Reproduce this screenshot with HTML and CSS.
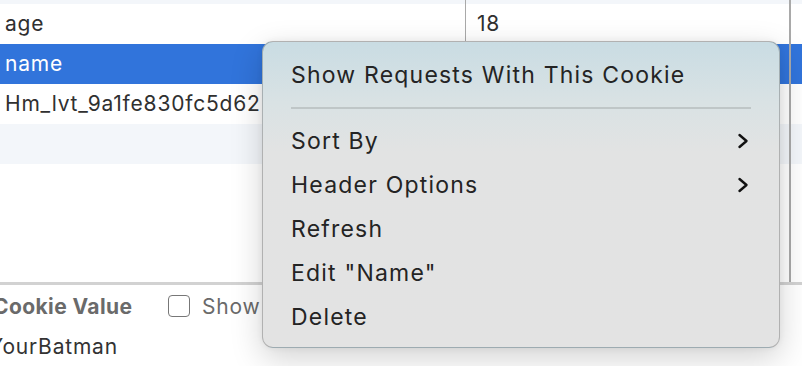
FILE: index.html
```html
<!DOCTYPE html>
<html>
<head>
<meta charset="utf-8">
<link rel="stylesheet" href="styles.css">
</head>
<body>
<div class="page">
  <div class="table">
    <div class="row stripe top"><div class="cell name"></div><div class="cell value"></div><div class="cell rest"></div></div>
    <div class="row"><div class="cell name">age</div><div class="cell value">18</div><div class="cell rest"></div></div>
    <div class="row selected"><div class="cell name">name</div><div class="cell value"></div><div class="cell rest"></div></div>
    <div class="row"><div class="cell name">Hm_lvt_9a1fe830fc5d62</div><div class="cell value"></div><div class="cell rest"></div></div>
    <div class="row stripe"><div class="cell name"></div><div class="cell value"></div><div class="cell rest"></div></div>
    <div class="row filler"><div class="cell name"></div><div class="cell value"></div><div class="cell rest"></div></div>
  </div>
  <div class="detail">
    <div class="detail-head">
      <span class="detail-title">Cookie Value</span>
      <label class="check"><span class="box"></span><span class="check-label">Show URL-decoded</span></label>
    </div>
    <div class="detail-value">YourBatman</div>
  </div>

  <div class="menu">
    <div class="item">Show Requests With This Cookie</div>
    <div class="sep"></div>
    <div class="item">Sort By<svg class="chev" viewBox="0 0 12 16"><polyline points="2.5,2 9.5,8 2.5,14"/></svg></div>
    <div class="item">Header Options<svg class="chev" viewBox="0 0 12 16"><polyline points="2.5,2 9.5,8 2.5,14"/></svg></div>
    <div class="item">Refresh</div>
    <div class="item">Edit "Name"</div>
    <div class="item">Delete</div>
  </div>
</div>
</body>
</html>
```

FILE: styles.css
```css
html, body {
  margin: 0;
  padding: 0;
  background: #ffffff;
  overflow: hidden;
}
.page {
  position: relative;
  width: 802px;
  height: 366px;
  font-family: "Inter", "Liberation Sans", sans-serif;
  font-size: 21px;
  letter-spacing: 0.8px;
  color: #303030;
  overflow: hidden;
}
.table {
  display: flex;
  flex-direction: column;
  height: 282px;
}
.row {
  display: flex;
  height: 40px;
  flex: none;
}
.row.top {
  height: 4px;
}
.row.filler {
  flex: 1;
  height: auto;
}
.stripe {
  background: #f3f6fa;
}
.selected {
  background: #3174db;
  color: #ffffff;
}
.cell {
  display: flex;
  align-items: center;
  overflow: hidden;
  white-space: nowrap;
  padding-bottom: 1px;
  box-sizing: border-box;
}
.cell.name {
  width: 466px;
  padding-left: 5px;
  border-right: 1px solid #a9a9a9;
}
.cell.value {
  width: 325px;
  padding-left: 11px;
  border-right: 2px solid #a9a9a9;
}
.cell.rest {
  flex: 1;
}
.detail {
  border-top: 3px solid #d2d2d2;
}
.detail-head {
  display: flex;
  align-items: center;
  height: 42px;
  margin-left: -7px;
}
.detail-title {
  font-weight: 700;
  color: #6a6a6a;
  width: 175px;
  letter-spacing: 0.4px;
}
.check {
  display: flex;
  align-items: center;
  gap: 12px;
  color: #6a6a6a;
}
.box {
  width: 20px;
  height: 20px;
  border: 1.5px solid #777;
  border-radius: 4px;
  background: #fff;
}
.detail-value {
  margin-left: -11px;
  color: #333;
  line-height: 40px;
}
.menu {
  position: absolute;
  left: 262px;
  top: 41px;
  width: 518px;
  height: 307px;
  box-sizing: border-box;
  border: 1px solid rgba(0, 0, 0, 0.22);
  border-radius: 11px;
  background: linear-gradient(180deg, #c9dce3 0px, #d9e2e4 60px, #e2e3e3 110px, #e3e3e3 100%);
  box-shadow: 0 10px 32px rgba(0, 0, 0, 0.18), 0 0 6px rgba(0, 0, 0, 0.06);
  padding: 11px 0 8px 0;
  color: #242424;
  font-size: 23px;
  letter-spacing: 1.2px;
}
.item {
  display: flex;
  align-items: center;
  justify-content: space-between;
  height: 44px;
  padding: 0 30px 0 28px;
}
.sep {
  height: 2px;
  margin: 10px 28px 10px 28px;
  background: #bfc6c7;
}
.chev {
  width: 12px;
  height: 16px;
  fill: none;
  stroke: #111;
  stroke-width: 2.4;
  stroke-linecap: round;
  stroke-linejoin: round;
}
```
